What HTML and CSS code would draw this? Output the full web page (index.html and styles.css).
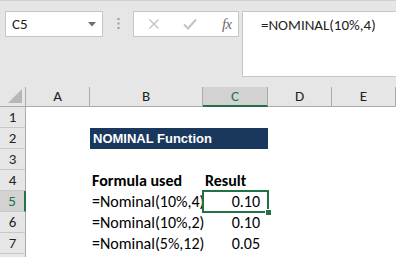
FILE: index.html
```html
<!DOCTYPE html>
<html>
<head>
<meta charset="utf-8">
<link rel="stylesheet" href="styles.css">
</head>
<body>
<div class="app">
  <div class="toolbar">
    <div class="namebox">
      <span class="name">C5</span>
      <svg class="drop" width="8" height="5" viewBox="0 0 8 5"><path d="M0 0 H8 L4 4.5 Z" fill="#6d6d6d"/></svg>
    </div>
    <div class="grip">
      <svg width="3" height="11" viewBox="0 0 3 11"><rect x="0.5" y="0" width="2" height="2" fill="#9a9a9a"/><rect x="0.5" y="4.5" width="2" height="2" fill="#9a9a9a"/><rect x="0.5" y="9" width="2" height="2" fill="#9a9a9a"/></svg>
    </div>
    <div class="fnbox">
      <svg class="ico" width="12" height="12" viewBox="0 0 12 12"><path d="M1.5 1.5 L10.5 10.5 M10.5 1.5 L1.5 10.5" stroke="#c3c3c3" stroke-width="1.4" fill="none"/></svg>
      <svg class="ico" width="14" height="12" viewBox="0 0 14 12"><path d="M1 6.5 L5 10.5 L13 1.5" stroke="#c3c3c3" stroke-width="2" fill="none"/></svg>
      <span class="fx">fx</span>
    </div>
    <div class="formula">=NOMINAL(10%,4)</div>
  </div>
  <div class="sheet">
    <div class="corner"><svg width="14" height="14" viewBox="0 0 14 14"><path d="M14 0 V14 H0 Z" fill="#b7b7b7"/></svg></div>
    <div class="ch">A</div>
    <div class="ch">B</div>
    <div class="ch sel">C</div>
    <div class="ch">D</div>
    <div class="ch">E</div>

    <div class="rh">1</div><div class="c"></div><div class="c"></div><div class="c"></div><div class="c"></div><div class="c"></div>
    <div class="rh">2</div><div class="c"></div><div class="c title">NOMINAL Function</div><div class="c"></div><div class="c"></div>
    <div class="rh">3</div><div class="c"></div><div class="c"></div><div class="c"></div><div class="c"></div><div class="c"></div>
    <div class="rh">4</div><div class="c"></div><div class="c b">Formula used</div><div class="c b">Result</div><div class="c"></div><div class="c"></div>
    <div class="rh sel">5</div><div class="c"></div><div class="c">=Nominal(10%,4)</div><div class="c num active">0.10<span class="handle"></span></div><div class="c"></div><div class="c"></div>
    <div class="rh">6</div><div class="c"></div><div class="c">=Nominal(10%,2)</div><div class="c num">0.10</div><div class="c"></div><div class="c"></div>
    <div class="rh">7</div><div class="c"></div><div class="c">=Nominal(5%,12)</div><div class="c num">0.05</div><div class="c"></div><div class="c"></div>
    <div class="rh"></div><div class="c"></div><div class="c"></div><div class="c"></div><div class="c"></div><div class="c"></div>
  </div>
</div>
</body>
</html>
```
FILE: styles.css
```css
* { box-sizing: border-box; }
html, body { margin: 0; padding: 0; background: #fff; }
body { width: 396px; height: 257px; overflow: hidden; font-family: Carlito, Lato, "Liberation Sans", sans-serif; }

.app { width: 396px; height: 257px; overflow: hidden; }

.toolbar {
  height: 87px;
  background: #e6e6e6;
  border-top: 1px solid #d0d0d0;
  display: flex;
  align-items: flex-start;
  padding-top: 10px;
  position: relative;
}
.namebox {
  margin-left: 5px;
  width: 102px;
  height: 26px;
  background: #fff;
  border: 1px solid #c6c6c6;
  display: flex;
  align-items: center;
  justify-content: space-between;
  padding: 0 6px 0 6px;
}
.name { font-size: 15px; color: #222; }
.grip { width: 31px; height: 26px; display: flex; align-items: center; justify-content: center; padding-bottom: 1px; }
.fnbox {
  width: 110px;
  height: 26px;
  background: #fff;
  border: 1px solid #c6c6c6;
  display: flex;
  align-items: center;
  padding-left: 14px;
}
.fnbox .ico:nth-child(1) { margin-right: 23px; }
.fnbox .ico:nth-child(2) { margin-right: 25px; }
.fx { font-family: "Liberation Serif", serif; font-style: italic; font-size: 15px; color: #6a6a6a; letter-spacing: -0.5px; }
.formula {
  margin-left: 3px;
  width: 160px;
  height: 66px;
  background: #fff;
  border: 1px solid #c6c6c6;
  border-right: none;
  padding: 3px 0 0 11px;
  font-size: 15px;
  color: #222;
  line-height: 20px;
  padding-left: 18px;
}

.sheet {
  display: grid;
  grid-template-columns: 26px 64px 113px 65px 64px 1fr;
  grid-template-rows: 20px repeat(8, 21px);
  position: relative;
}
.corner {
  background: #e6e6e6;
  border-right: 1px solid #ababab;
  border-bottom: 1px solid #ababab;
  display: flex;
  align-items: flex-end;
  justify-content: flex-end;
  padding: 0 3px 3px 0;
}
.corner svg { display: block; }
.ch {
  background: #e6e6e6;
  border-right: 1px solid #ababab;
  border-bottom: 1px solid #ababab;
  text-align: center;
  font-size: 15px;
  line-height: 19px;
  color: #222;
}
.ch.sel { background: #d2d2d2; border-bottom: 2px solid #217346; color: #217346; }
.rh {
  background: #e6e6e6;
  border-right: 1px solid #ababab;
  border-bottom: 1px solid #c8c8c8;
  text-align: center;
  font-size: 15px;
  line-height: 21px;
  color: #222;
}
.rh.sel { background: #d2d2d2; border-right: 2px solid #217346; color: #217346; }
.c {
  font-size: 16px;
  line-height: 22px;
  color: #000;
  padding-left: 2px;
  white-space: nowrap;
  position: relative;
}
.c.b { font-weight: bold; }
.title {
  grid-column: span 2;
  background: #1a375e;
  color: #fff;
  font-family: "Liberation Sans", Arial, sans-serif;
  font-weight: bold;
  font-size: 13px;
  line-height: 21px;
  padding-left: 3px;
}
.num { text-align: right; padding-right: 8px; }
.active {
  outline: 2px solid #217346;
  outline-offset: -1px;
}
.handle {
  position: absolute;
  right: -4px;
  bottom: -4px;
  width: 7px;
  height: 7px;
  background: #217346;
  border: 1px solid #fff;
}
```
